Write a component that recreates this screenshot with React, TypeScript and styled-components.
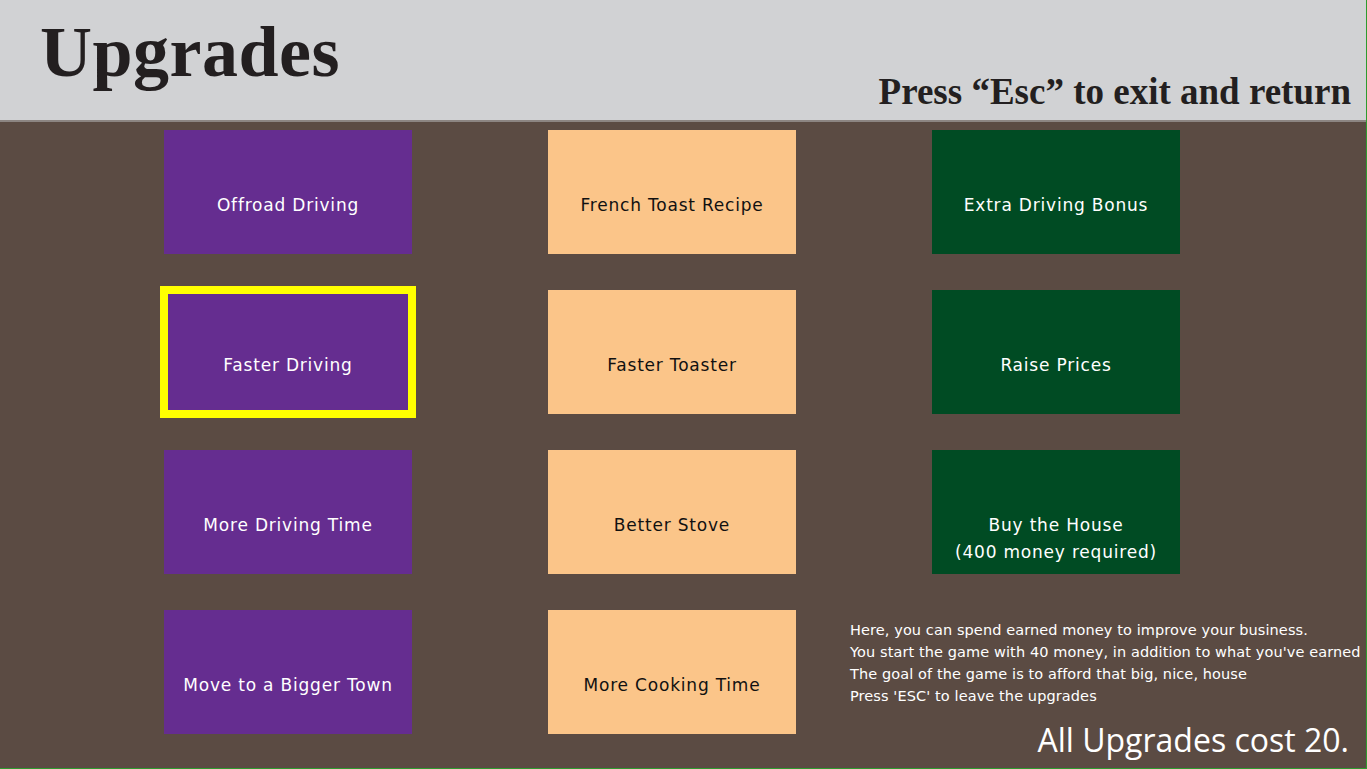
import React from "react";
import styled, { createGlobalStyle } from "styled-components";

const GlobalStyle = createGlobalStyle`
  html, body {
    margin: 0;
    padding: 0;
    background: #5b4b43;
  }
`;

const Screen = styled.div`
  width: 1366px;
  height: 768px;
  display: flex;
  flex-direction: column;
  background: #5b4b43;
  border-right: 1px solid #2e9b2e;
  border-bottom: 1px solid #2e9b2e;
  overflow: hidden;
`;

const Header = styled.header`
  height: 120px;
  flex: none;
  display: flex;
  justify-content: space-between;
  padding: 0 15px 0 40px;
  background: #d1d2d4;
  border-bottom: 2px solid #8c8582;
`;

const Title = styled.h1`
  margin: 0;
  padding-top: 12px;
  font-family: "Liberation Serif", serif;
  font-weight: 900;
  font-size: 72px;
  line-height: 80px;
  letter-spacing: 0.5px;
  color: #231f20;
`;

const Hint = styled.div`
  align-self: flex-end;
  padding-bottom: 8px;
  font-family: "Liberation Serif", serif;
  font-weight: bold;
  font-size: 37px;
  line-height: 40px;
  letter-spacing: 0;
  color: #231f20;
`;

const Board = styled.main`
  display: grid;
  grid-template-columns: repeat(3, 248px) 1fr;
  grid-auto-rows: 124px;
  column-gap: 136px;
  row-gap: 36px;
  padding: 8px 0 0 164px;
`;

const palette = {
  driving: { bg: "#652d90", fg: "#ffffff" },
  cooking: { bg: "#fbc589", fg: "#111111" },
  business: { bg: "#004b23", fg: "#ffffff" },
};

type Kind = keyof typeof palette;

const Card = styled.div<{ $kind: Kind; $selected?: boolean }>`
  box-sizing: border-box;
  padding-top: 62px;
  text-align: center;
  font-family: "DejaVu Sans", sans-serif;
  font-size: 17px;
  line-height: 27px;
  letter-spacing: 0.8px;
  background: ${(p) => palette[p.$kind].bg};
  color: ${(p) => palette[p.$kind].fg};
  box-shadow: ${(p) =>
    p.$selected ? "0 0 0 4px #ffff00, inset 0 0 0 4px #ffff00" : "none"};
`;

const Info = styled.div`
  grid-column: 3 / span 2;
  margin-left: -82px;
  display: flex;
  flex-direction: column;
  color: #ffffff;
`;

const Notes = styled.div`
  padding-top: 9px;
  font-family: "DejaVu Sans", sans-serif;
  font-size: 14.5px;
  line-height: 22px;
  letter-spacing: 0.1px;
  white-space: nowrap;
`;

const Cost = styled.div`
  align-self: flex-end;
  margin-top: 13px;
  padding-right: 17px;
  font-family: "Open Sans", sans-serif;
  font-size: 32px;
  line-height: 40px;
  white-space: nowrap;
`;

const rows: [string, Kind, boolean?][][] = [
  [
    ["Offroad Driving", "driving"],
    ["French Toast Recipe", "cooking"],
    ["Extra Driving Bonus", "business"],
  ],
  [
    ["Faster Driving", "driving", true],
    ["Faster Toaster", "cooking"],
    ["Raise Prices", "business"],
  ],
  [
    ["More Driving Time", "driving"],
    ["Better Stove", "cooking"],
    ["Buy the House\n(400 money required)", "business"],
  ],
  [
    ["Move to a Bigger Town", "driving"],
    ["More Cooking Time", "cooking"],
  ],
];

export default function App() {
  return (
    <>
      <GlobalStyle />
      <Screen>
        <Header>
          <Title>Upgrades</Title>
          <Hint>Press “Esc” to exit and return</Hint>
        </Header>
        <Board>
          {rows.map((row, i) => (
            <React.Fragment key={i}>
              {row.map(([label, kind, selected]) => (
                <Card key={label} $kind={kind} $selected={selected}>
                  {label.split("\n").map((line) => (
                    <div key={line}>{line}</div>
                  ))}
                </Card>
              ))}
              {i < 3 && <div />}
            </React.Fragment>
          ))}
          <Info>
            <Notes>
              Here, you can spend earned money to improve your business.
              <br />
              You start the game with 40 money, in addition to what you've earned
              <br />
              The goal of the game is to afford that big, nice, house
              <br />
              Press 'ESC' to leave the upgrades
            </Notes>
            <Cost>All Upgrades cost 20.</Cost>
          </Info>
        </Board>
      </Screen>
    </>
  );
}
